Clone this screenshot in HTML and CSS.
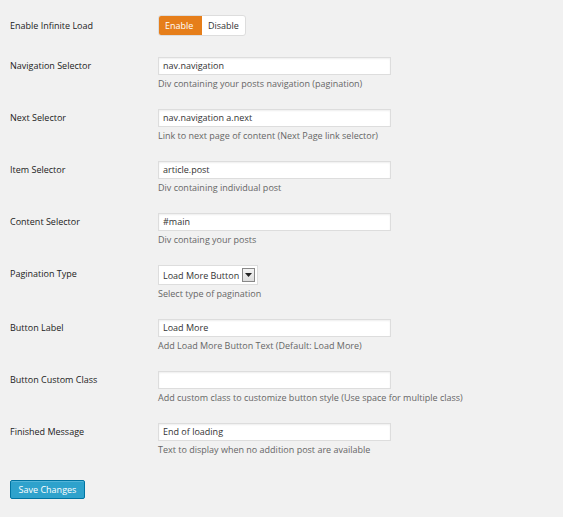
FILE: index.html
```html
<!DOCTYPE html>
<html>
<head>
<meta charset="utf-8">
<link rel="stylesheet" href="styles.css">
</head>
<body>
<div class="form">
  <div class="row row-first">
    <div class="label">Enable Infinite Load</div>
    <div class="field">
      <div class="toggle"><span class="seg on">Enable</span><span class="seg">Disable</span></div>
    </div>
  </div>
  <div class="row">
    <div class="label">Navigation Selector</div>
    <div class="field"><div class="input">nav.navigation</div><div class="desc">Div containing your posts navigation (pagination)</div></div>
  </div>
  <div class="row">
    <div class="label">Next Selector</div>
    <div class="field"><div class="input">nav.navigation a.next</div><div class="desc">Link to next page of content (Next Page link selector)</div></div>
  </div>
  <div class="row">
    <div class="label">Item Selector</div>
    <div class="field"><div class="input">article.post</div><div class="desc">Div containing individual post</div></div>
  </div>
  <div class="row">
    <div class="label">Content Selector</div>
    <div class="field"><div class="input">#main</div><div class="desc">Div containg your posts</div></div>
  </div>
  <div class="row">
    <div class="label">Pagination Type</div>
    <div class="field">
      <div class="select"><span class="sel-text">Load More Button</span><span class="arrow"><svg width="9" height="6" viewBox="0 0 9 6"><path d="M1 1h7L4.5 5z" fill="#222"/></svg></span></div>
      <div class="desc">Select type of pagination</div>
    </div>
  </div>
  <div class="row">
    <div class="label">Button Label</div>
    <div class="field"><div class="input">Load More</div><div class="desc">Add Load More Button Text (Default: Load More)</div></div>
  </div>
  <div class="row">
    <div class="label">Button Custom Class</div>
    <div class="field"><div class="input"></div><div class="desc">Add custom class to customize button style (Use space for multiple class)</div></div>
  </div>
  <div class="row">
    <div class="label">Finished Message</div>
    <div class="field"><div class="input">End of loading</div><div class="desc">Text to display when no addition post are available</div></div>
  </div>
  <div class="actions"><button class="save">Save Changes</button></div>
</div>
</body>
</html>
```
FILE: styles.css
```css
html, body { margin: 0; padding: 0; background: #f1f1f1; }
body { font-family: "Open Sans", "Liberation Sans", sans-serif; font-size: 9px; color: #222; }
.form { padding: 15px 10px 0 10px; }
.row { display: grid; grid-template-columns: 148px 1fr; align-items: start; margin-bottom: 19px; }
.row-first { margin-bottom: 21px; }
.label { line-height: 18px; color: #222; }
.row-first .label { line-height: 21px; }
.toggle { display: inline-flex; height: 21px; border: 1px solid #ddd; border-radius: 3px; background: #fff; box-sizing: border-box; overflow: hidden; }
.seg { display: flex; align-items: center; padding: 0 6px; color: #333; }
.seg.on { background: #e67e1a; color: #fff; width: 31px; }
.input { width: 233px; height: 18px; box-sizing: border-box; border: 1px solid #ddd; background: #fff; box-shadow: inset 0 1px 2px rgba(0,0,0,0.07); padding: 0 4px; line-height: 16px; color: #333; }
.desc { margin-top: 3px; line-height: 12px; color: #666; }
.select { display: inline-flex; align-items: center; height: 20px; box-sizing: border-box; border: 1px solid #ddd; background: #fff; padding: 0 2px 0 4px; color: #333; }
.sel-text { margin-right: 3px; }
.arrow { display: flex; align-items: center; justify-content: center; width: 13px; height: 14px; border: 1px solid #888; box-sizing: border-box; background: linear-gradient(#f4f4f4, #ddd); }
.actions { padding-top: 5px; }
.save { font-family: "Open Sans", "Liberation Sans", sans-serif; font-size: 9px; color: #fff; background: #2ea2cc; border: 1px solid #0074a2; border-radius: 2px; height: 19px; width: 75px; padding: 0; box-shadow: inset 0 1px 0 rgba(120,200,230,0.5); }
```
